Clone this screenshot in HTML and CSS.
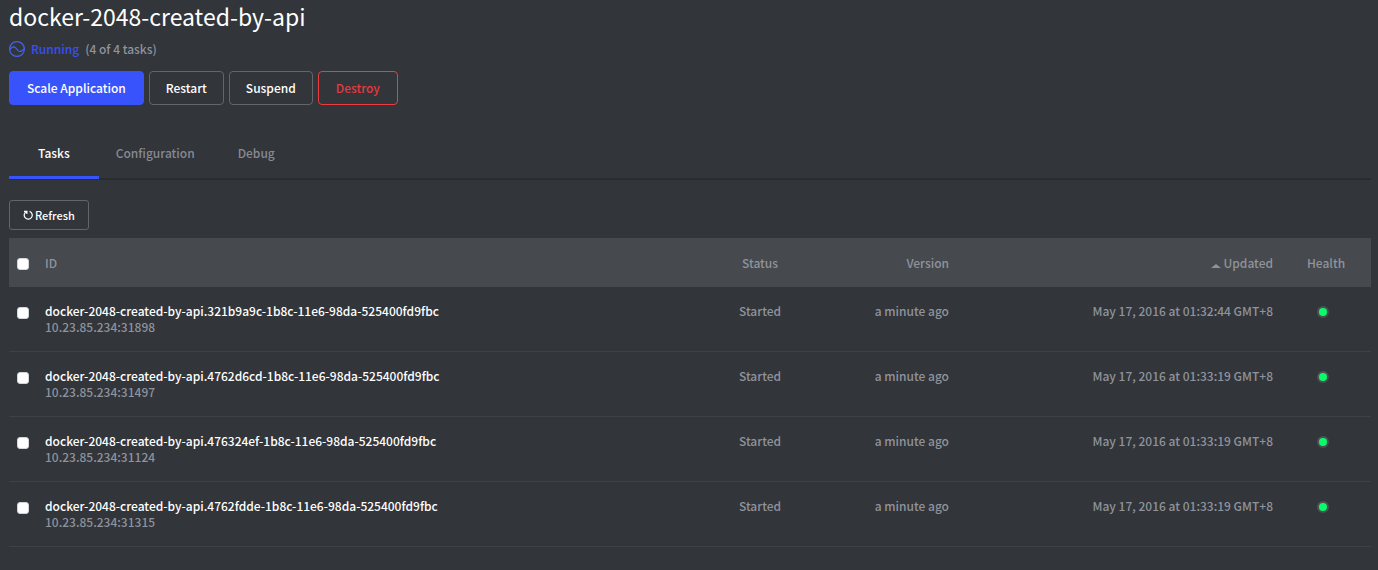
FILE: index.html
```html
<!DOCTYPE html>
<html lang="en">
<head>
<meta charset="utf-8">
<title>docker-2048-created-by-api</title>
<link rel="stylesheet" href="styles.css">
</head>
<body>
<main class="page">
  <h1 class="app-name">docker-2048-created-by-api</h1>
  <div class="app-status">
    <svg class="status-icon" viewBox="0 0 16 16" aria-hidden="true"><circle cx="8" cy="8" r="7.4"/><path d="M.8 8.6C2.6 6.2 4.8 5 6.6 6.8L9.2 9.6C11.2 11.4 13.4 9.9 15.2 7.6"/></svg>
    <span class="status-name">Running</span>
    <span class="status-count">(4 of 4 tasks)</span>
  </div>
  <div class="actions">
    <button class="btn btn-primary" type="button">Scale Application</button>
    <button class="btn" type="button">Restart</button>
    <button class="btn" type="button">Suspend</button>
    <button class="btn btn-danger" type="button">Destroy</button>
  </div>
  <nav class="tabs">
    <a class="tab tab-active" href="#tasks">Tasks</a>
    <a class="tab" href="#configuration">Configuration</a>
    <a class="tab" href="#debug">Debug</a>
  </nav>
  <button class="btn btn-small" type="button"><svg class="refresh-icon" viewBox="0 0 10 10" aria-hidden="true"><path d="M1 1.3H3.9V4.1M3.6 1.5A4 4 0 1 0 6.6 1.4"/></svg>Refresh</button>
  <table class="tasks">
    <thead>
      <tr>
        <th class="col-check"><input class="check" type="checkbox" aria-label="Select all tasks"></th>
        <th class="col-id">ID</th>
        <th class="col-status">Status</th>
        <th class="col-version">Version</th>
        <th class="col-updated"><span class="caret"></span>Updated</th>
        <th class="col-health">Health</th>
      </tr>
    </thead>
    <tbody>
      <tr>
        <td class="col-check"><input class="check" type="checkbox" aria-label="Select task 321b9a9c"></td>
        <td class="col-id"><a class="task-link" href="#321b9a9c">docker-2048-created-by-api.321b9a9c-1b8c-11e6-98da-525400fd9fbc</a><span class="host">10.23.85.234:31898</span></td>
        <td class="col-status">Started</td>
        <td class="col-version">a minute ago</td>
        <td class="col-updated">May 17, 2016 at 01:32:44 GMT+8</td>
        <td class="col-health"><span class="dot"></span></td>
      </tr>
      <tr>
        <td class="col-check"><input class="check" type="checkbox" aria-label="Select task 4762d6cd"></td>
        <td class="col-id"><a class="task-link" href="#4762d6cd">docker-2048-created-by-api.4762d6cd-1b8c-11e6-98da-525400fd9fbc</a><span class="host">10.23.85.234:31497</span></td>
        <td class="col-status">Started</td>
        <td class="col-version">a minute ago</td>
        <td class="col-updated">May 17, 2016 at 01:33:19 GMT+8</td>
        <td class="col-health"><span class="dot"></span></td>
      </tr>
      <tr>
        <td class="col-check"><input class="check" type="checkbox" aria-label="Select task 476324ef"></td>
        <td class="col-id"><a class="task-link" href="#476324ef">docker-2048-created-by-api.476324ef-1b8c-11e6-98da-525400fd9fbc</a><span class="host">10.23.85.234:31124</span></td>
        <td class="col-status">Started</td>
        <td class="col-version">a minute ago</td>
        <td class="col-updated">May 17, 2016 at 01:33:19 GMT+8</td>
        <td class="col-health"><span class="dot"></span></td>
      </tr>
      <tr>
        <td class="col-check"><input class="check" type="checkbox" aria-label="Select task 4762fdde"></td>
        <td class="col-id"><a class="task-link" href="#4762fdde">docker-2048-created-by-api.4762fdde-1b8c-11e6-98da-525400fd9fbc</a><span class="host">10.23.85.234:31315</span></td>
        <td class="col-status">Started</td>
        <td class="col-version">a minute ago</td>
        <td class="col-updated">May 17, 2016 at 01:33:19 GMT+8</td>
        <td class="col-health"><span class="dot"></span></td>
      </tr>
    </tbody>
  </table>
</main>
</body>
</html>
```

FILE: styles.css
```css
* { box-sizing: border-box; }
body {
  margin: 0;
  background: #32353a;
  color: #8f939c;
  font: 500 12px/16px "Noto Sans CJK SC", "Open Sans", sans-serif;
}
.page { padding: 0 7px 16px 9px; }
.app-name {
  margin: 0;
  color: #fff;
  font-size: 23px;
  line-height: 32px;
  font-weight: 400;
}
.app-status { display: flex; align-items: center; gap: 6px; margin-top: 9px; }
.status-icon { width: 16px; height: 16px; fill: none; stroke: #4562f0; stroke-width: 1.2; }
.status-name { color: #3850f5; }
.actions { display: flex; gap: 5px; margin-top: 14px; }
.btn {
  height: 34px;
  padding: 0 16px;
  border: 1px solid #62656a;
  border-radius: 4px;
  background: transparent;
  color: #fff;
  font: inherit;
  white-space: nowrap;
}
.btn-primary { padding: 0 17px; border-color: #3853fc; background: #3853fc; }
.btn-danger { padding: 0 17px; border-color: #ee3b3e; color: #e6393e; }
.tabs {
  display: flex;
  margin: 24px 0 20px;
  border-bottom: 2px solid #2a2c30;
}
.tab {
  padding: 16px 14px 15px;
  margin-right: 15px;
  border-bottom: 3px solid transparent;
  margin-bottom: -1px;
  color: #868a93;
  text-decoration: none;
}
.tab-active { padding: 16px 29px 15px; margin-right: 3px; border-color: #3853fc; color: #fff; }
.btn-small {
  display: flex;
  align-items: center;
  gap: 2px;
  height: 30px;
  padding: 0 13px;
  border-radius: 3px;
  font-size: 11px;
}
.refresh-icon { width: 10px; height: 10px; fill: none; stroke: #fff; stroke-width: 1.2; }
.tasks { width: 100%; margin-top: 8px; border-collapse: separate; border-spacing: 0; table-layout: fixed; }
.tasks th { height: 49px; padding: 1px 8px 0; background: #46494d; color: #8f939c; font-weight: 500; }
.tasks td { height: 65px; padding: 16px 8px; border-bottom: 1px solid #3e4145; vertical-align: top; white-space: nowrap; }
.tasks .col-check { width: 28px; text-align: left; }
.tasks .col-id { text-align: left; }
.tasks .col-status { width: 112px; text-align: center; }
.tasks .col-version { width: 141px; text-align: right; }
.tasks .col-updated { width: 324px; text-align: right; }
.tasks .col-health { width: 90px; text-align: center; }
.check {
  display: block;
  appearance: none;
  width: 12px;
  height: 12px;
  margin: 4px 0 0;
  border: 1px solid #d4d5d7;
  border-radius: 3px;
  background: #fff;
}
th .check { margin-top: 2px; }
.task-link { display: block; color: #fff; text-decoration: none; }
.host { display: block; }
.caret {
  display: inline-block;
  margin-right: 2px;
  border: 5px solid transparent;
  border-top: 0;
  border-bottom: 4px solid #8f939c;
}
.dot {
  display: block;
  width: 12px;
  height: 12px;
  margin: 3px auto 0 28px;
  border: 2px solid #4b5156;
  border-radius: 50%;
  background: #0cfa67;
}
```
